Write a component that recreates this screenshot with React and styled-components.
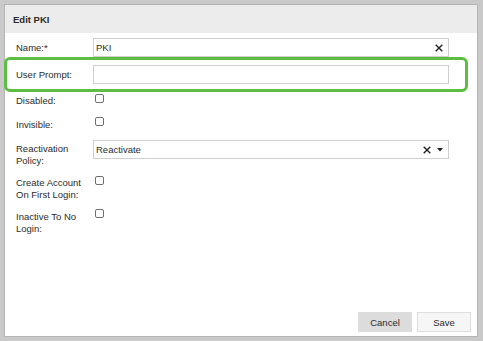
import React from "react";
import styled, { createGlobalStyle } from "styled-components";

const Global = createGlobalStyle`
  html, body { margin: 0; padding: 0; background: #c9c9c9; }
  * { box-sizing: border-box; }
  body { font-family: "Liberation Sans", Arial, sans-serif; font-size: 9.5px; color: #2b2b2b; }
`;

const Dialog = styled.div`
  position: relative;
  margin: 4px;
  width: 474px;
  height: 333px;
  background: #fff;
  border: 1px solid #b4b4b4;
  display: flex;
  flex-direction: column;
`;

const Header = styled.div`
  height: 28px;
  background: #ececec;
  display: flex;
  align-items: center;
  padding-left: 8px;
  font-weight: bold;
  font-size: 9.5px;
  color: #2b2b2b;
`;

const Form = styled.div`
  flex: 1;
  display: flex;
  flex-direction: column;
  padding: 5px 0 0 11px;
`;

const Row = styled.div`
  display: grid;
  grid-template-columns: 77px 356px;
  align-items: ${(p) => (p.$center ? "center" : "start")};
  margin-top: ${(p) => p.$mt}px;
`;

const Label = styled.div`
  line-height: 12px;
  padding-top: ${(p) => p.$pt || 0}px;
  padding-right: 4px;
  color: #2b2b2b;
`;

const Field = styled.div`
  position: relative;
  height: 19px;
  border: 1px solid #cfcfcf;
  background: #fff;
  display: flex;
  align-items: center;
  padding: 0 5px 0 2px;
`;

const Value = styled.span`
  flex: 1;
  color: #2b2b2b;
  font-size: 9.5px;
`;

const Check = styled.span`
  display: block;
  width: 9px;
  height: 9px;
  margin-left: 2px;
  border: 1px solid #6f6f6f;
  border-radius: 2px;
  background: #fff;
`;

const Icons = styled.span`
  display: flex;
  align-items: center;
  gap: 6px;
`;

const Footer = styled.div`
  display: flex;
  justify-content: flex-end;
  gap: 5px;
  padding: 0 6px 4px 0;
`;

const Button = styled.button`
  width: 54px;
  height: 20px;
  font-family: inherit;
  font-size: 9.5px;
  color: #2b2b2b;
  background: ${(p) => (p.$primary ? "#f6f6f6" : "#dcdcdc")};
  border: 1px solid ${(p) => (p.$primary ? "#dedede" : "#dcdcdc")};
  border-radius: 0;
  padding: 0;
`;

const Highlight = styled.div`
  position: absolute;
  top: 52px;
  left: -1px;
  width: 464px;
  height: 35px;
  border: 3px solid #5cbf41;
  border-radius: 6px;
  pointer-events: none;
`;

const ClearX = () => (
  <svg width="8" height="8" viewBox="0 0 8 8">
    <path d="M0.7 0.7 L7.3 7.3 M7.3 0.7 L0.7 7.3" stroke="#222" strokeWidth="1.4" fill="none" />
  </svg>
);

const Caret = () => (
  <svg width="6" height="4" viewBox="0 0 6 4">
    <path d="M0 0 H6 L3 3.5 Z" fill="#222" />
  </svg>
);

export default function App() {
  return (
    <>
      <Global />
      <Dialog>
        <Header>Edit PKI</Header>
        <Form>
          <Row $mt={0} $center>
            <Label>Name:*</Label>
            <Field>
              <Value>PKI</Value>
              <ClearX />
            </Field>
          </Row>
          <Row $mt={8} $center>
            <Label>User Prompt:</Label>
            <Field />
          </Row>
          <Row $mt={10}>
            <Label $pt={1}>Disabled:</Label>
            <Check />
          </Row>
          <Row $mt={10}>
            <Label $pt={2}>Invisible:</Label>
            <Check />
          </Row>
          <Row $mt={9}>
            <Label $pt={3}>Reactivation Policy:</Label>
            <Field>
              <Value>Reactivate</Value>
              <Icons>
                <ClearX />
                <Caret />
              </Icons>
            </Field>
          </Row>
          <Row $mt={9}>
            <Label $pt={1}>Create Account On First Login:</Label>
            <Check />
          </Row>
          <Row $mt={8}>
            <Label $pt={2}>Inactive To No Login:</Label>
            <Check />
          </Row>
        </Form>
        <Footer>
          <Button>Cancel</Button>
          <Button $primary>Save</Button>
        </Footer>
        <Highlight />
      </Dialog>
    </>
  );
}
